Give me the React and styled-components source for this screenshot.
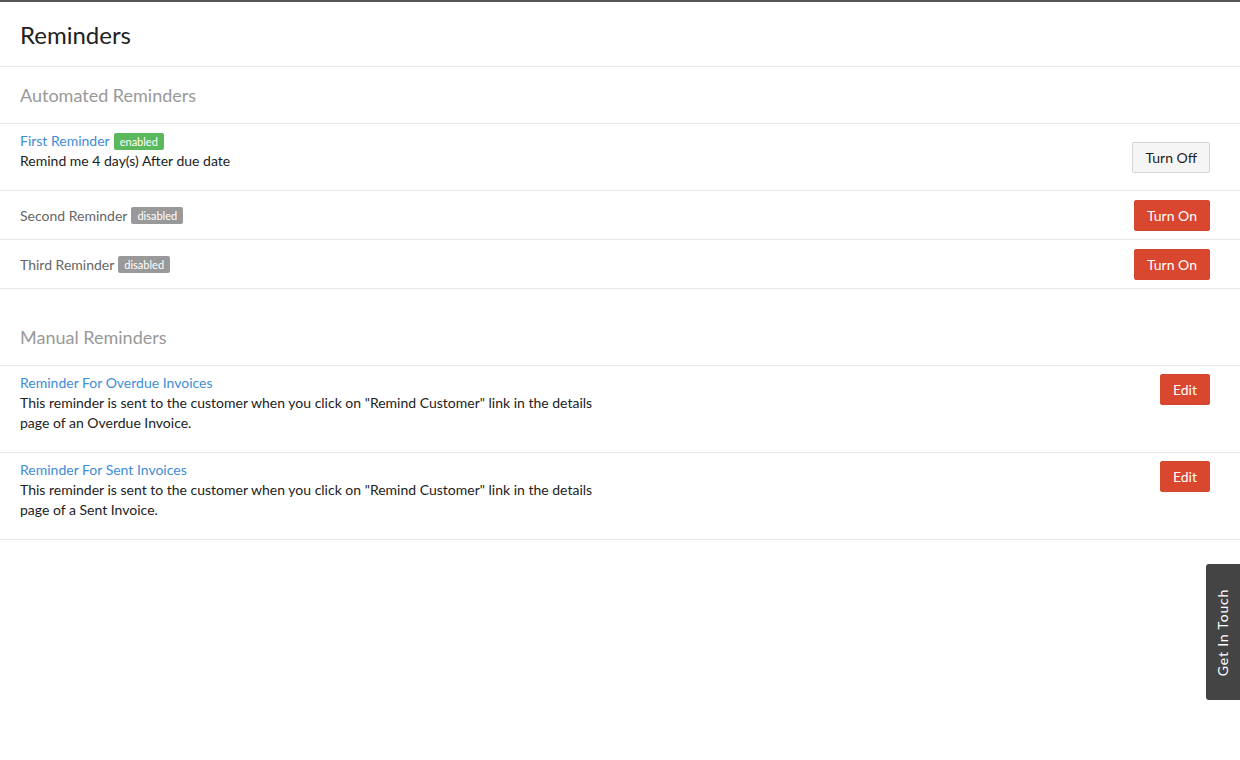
import React from "react";
import styled, { createGlobalStyle } from "styled-components";

const Global = createGlobalStyle`
  html, body { margin: 0; padding: 0; background: #fff; }
  body {
    font-family: Lato, "Open Sans", "Liberation Sans", sans-serif;
    font-size: 14px;
    color: #222;
    border-top: 2px solid #555;
  }
`;

const Page = styled.div`
  display: flex;
  flex-direction: column;
`;

const Header = styled.div`
  height: 64px;
  display: flex;
  align-items: center;
  padding: 0 20px;
  border-bottom: 1px solid #e8e8e8;
`;

const Title = styled.h1`
  margin: 0;
  font-weight: 400;
  font-size: 24px;
  color: #222;
`;

const SectionHeader = styled.div`
  height: 56px;
  display: flex;
  align-items: center;
  padding: 0 20px;
  border-bottom: 1px solid #e8e8e8;
  margin-top: ${(p) => (p.$spaced ? "20px" : "0")};
  font-size: 18px;
  color: #999;
`;

const Row = styled.div`
  display: flex;
  justify-content: space-between;
  align-items: ${(p) => (p.$top ? "flex-start" : "center")};
  padding: ${(p) => p.$pad || "8px 30px 8px 20px"};
  min-height: 32px;
  border-bottom: 1px solid #e8e8e8;
`;

const Info = styled.div`
  display: flex;
  flex-direction: column;
  line-height: 20px;
  align-self: flex-start;
  padding-bottom: ${(p) => p.$bottom || "0"};
`;

const NameLine = styled.div`
  display: flex;
  align-items: center;
  gap: 4px;
`;

const Link = styled.a`
  color: #408dd6;
  font-size: 14px;
  text-decoration: none;
  cursor: pointer;
`;

const Name = styled.span`
  color: #666;
  font-size: 14px;
`;

const Badge = styled.span`
  display: inline-block;
  background: ${(p) => (p.$on ? "#5cb85c" : "#999")};
  color: #fff;
  font-size: 11px;
  line-height: 17px;
  padding: 0 6px;
  border-radius: 2px;
`;

const Desc = styled.div`
  color: #222;
  font-size: 14px;
  max-width: 590px;
`;

const Button = styled.button`
  font-family: inherit;
  font-size: 14px;
  height: 31px;
  padding: 0 12px;
  margin-top: ${(p) => p.$offset || "0"};
  border-radius: 2px;
  cursor: pointer;
  border: 1px solid ${(p) => (p.$primary ? "#d34630" : "#d6d6d6")};
  background: ${(p) => (p.$primary ? "#d9472f" : "#f5f5f5")};
  color: ${(p) => (p.$primary ? "#fff" : "#222")};
  white-space: nowrap;
`;

const Tab = styled.div`
  position: fixed;
  right: 0;
  top: 564px;
  width: 34px;
  height: 136px;
  background: #444;
  border-radius: 3px 0 0 3px;
  display: flex;
  align-items: center;
  justify-content: center;
`;

const TabText = styled.span`
  transform: rotate(-90deg);
  white-space: nowrap;
  color: #fff;
  font-size: 14px;
  letter-spacing: 0.8px;
`;

export default function App() {
  return (
    <Page>
      <Global />
      <Header>
        <Title>Reminders</Title>
      </Header>

      <SectionHeader>Automated Reminders</SectionHeader>
      <Row $pad="7px 30px 7px 20px">
        <Info $bottom="12px">
          <NameLine>
            <Link>First Reminder</Link>
            <Badge $on>enabled</Badge>
          </NameLine>
          <Desc>Remind me 4 day(s) After due date</Desc>
        </Info>
        <Button>Turn Off</Button>
      </Row>
      <Row>
        <NameLine>
          <Name>Second Reminder</Name>
          <Badge>disabled</Badge>
        </NameLine>
        <Button $primary>Turn On</Button>
      </Row>
      <Row>
        <NameLine>
          <Name>Third Reminder</Name>
          <Badge>disabled</Badge>
        </NameLine>
        <Button $primary>Turn On</Button>
      </Row>

      <SectionHeader $spaced>Manual Reminders</SectionHeader>
      <Row $top $pad="7px 30px 19px 20px">
        <Info>
          <Link>Reminder For Overdue Invoices</Link>
          <Desc>
            This reminder is sent to the customer when you click on "Remind
            Customer" link in the details page of an Overdue Invoice.
          </Desc>
        </Info>
        <Button $primary $offset="1px">Edit</Button>
      </Row>
      <Row $top $pad="7px 30px 19px 20px">
        <Info>
          <Link>Reminder For Sent Invoices</Link>
          <Desc>
            This reminder is sent to the customer when you click on "Remind
            Customer" link in the details page of a Sent Invoice.
          </Desc>
        </Info>
        <Button $primary $offset="1px">Edit</Button>
      </Row>

      <Tab>
        <TabText>Get In Touch</TabText>
      </Tab>
    </Page>
  );
}
